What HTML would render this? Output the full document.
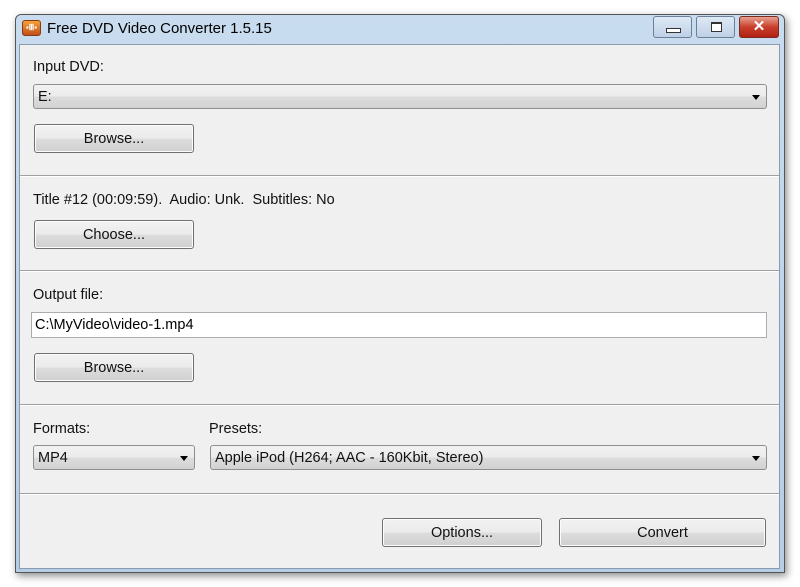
<!DOCTYPE html>
<html><head><style>
body{margin:0;width:800px;height:587px;background:#fff;position:relative;overflow:hidden;font-family:"Liberation Sans",sans-serif;}
.win{position:absolute;left:15px;top:14px;width:768px;height:557px;background:linear-gradient(#c9dcef,#b6cde6);border:1px solid #555;border-radius:6px 6px 0 0;box-shadow:2px 3px 8px rgba(0,0,0,.45);}
.client{position:absolute;left:19px;top:44px;width:759px;height:523px;background:#f0f0f0;border:1px solid #8a9bb0;}
.t{position:absolute;font-size:14.5px;color:#111;white-space:nowrap}
.btn{position:absolute;height:29px;border:1px solid #707070;border-radius:3px;background:linear-gradient(#f2f2f2 0,#ebebeb 50%,#dddddd 51%,#cfcfcf 100%);font-size:14.5px;text-align:center;line-height:29px;color:#111;box-sizing:border-box;box-shadow:inset 0 0 0 1px #fcfcfc}
.cb{position:absolute;height:25px;border:1px solid #8e8f8f;border-radius:3px;background:linear-gradient(#f2f2f2 0,#ebebeb 50%,#dddddd 51%,#d2d2d2 100%);font-size:14.5px;line-height:24px;padding-left:4px;box-sizing:border-box;color:#111}
.cb:after{content:"";position:absolute;right:6px;top:10px;border-left:4px solid transparent;border-right:4px solid transparent;border-top:5px solid #000}
.sep{position:absolute;left:20px;width:759px;height:1px;background:#a0a0a0;border-bottom:1px solid #fff}
.tb{position:absolute;top:16px;height:22px;border:1px solid #6b7f99;border-radius:3px;background:linear-gradient(#dfe9f5,#bfd0e6);box-sizing:border-box}
</style></head><body>
<div class="win"></div>
<div style="position:absolute;left:22px;top:20px;width:19px;height:16px;border-radius:3px;background:linear-gradient(#f7a13a,#c0501a);border:1px solid #8a3a10;box-sizing:border-box;font-size:8px;color:#fff;text-align:center;line-height:14px;font-weight:bold">▪Ⅲ▪</div>
<div class="t" style="left:47px;top:20px;font-size:15px;color:#000">Free DVD Video Converter 1.5.15</div>
<div class="tb" style="left:653px;width:39px"><div style="position:absolute;left:12px;top:11px;width:13px;height:3px;border:1px solid #333;background:#fff"></div></div>
<div class="tb" style="left:696px;width:39px"><div style="position:absolute;left:14px;top:5px;width:9px;height:7px;border:1px solid #333;border-top-width:2px;background:#fff"></div></div>
<div class="tb" style="left:739px;width:40px;border-color:#7a2a1e;background:linear-gradient(#e8a090,#c9402c 50%,#b02010);color:#fff;text-align:center;font-weight:bold;font-size:15px;line-height:20px">✕</div>
<div class="client"></div>
<div class="t" style="left:33px;top:59px">Input DVD:</div>
<div class="cb" style="left:33px;top:84px;width:734px">E:</div>
<div class="btn" style="left:34px;top:124px;width:160px">Browse...</div>
<div class="sep" style="top:175px"></div>
<div class="t" style="left:33px;top:192px">Title #12 (00:09:59).&nbsp; Audio: Unk.&nbsp; Subtitles: No</div>
<div class="btn" style="left:34px;top:220px;width:160px">Choose...</div>
<div class="sep" style="top:270px"></div>
<div class="t" style="left:33px;top:287px">Output file:</div>
<div style="position:absolute;left:31px;top:312px;width:736px;height:26px;border:1px solid #abadb3;background:#fff;box-sizing:border-box;font-size:14.5px;line-height:24px;padding-left:3px">C:\MyVideo\video-1.mp4</div>
<div class="btn" style="left:34px;top:353px;width:160px">Browse...</div>
<div class="sep" style="top:404px"></div>
<div class="t" style="left:33px;top:421px">Formats:</div>
<div class="t" style="left:209px;top:421px">Presets:</div>
<div class="cb" style="left:33px;top:445px;width:162px">MP4</div>
<div class="cb" style="left:210px;top:445px;width:557px">Apple iPod (H264; AAC - 160Kbit, Stereo)</div>
<div class="sep" style="top:493px"></div>
<div class="btn" style="left:382px;top:518px;width:160px">Options...</div>
<div class="btn" style="left:559px;top:518px;width:207px">Convert</div>
</body></html>
